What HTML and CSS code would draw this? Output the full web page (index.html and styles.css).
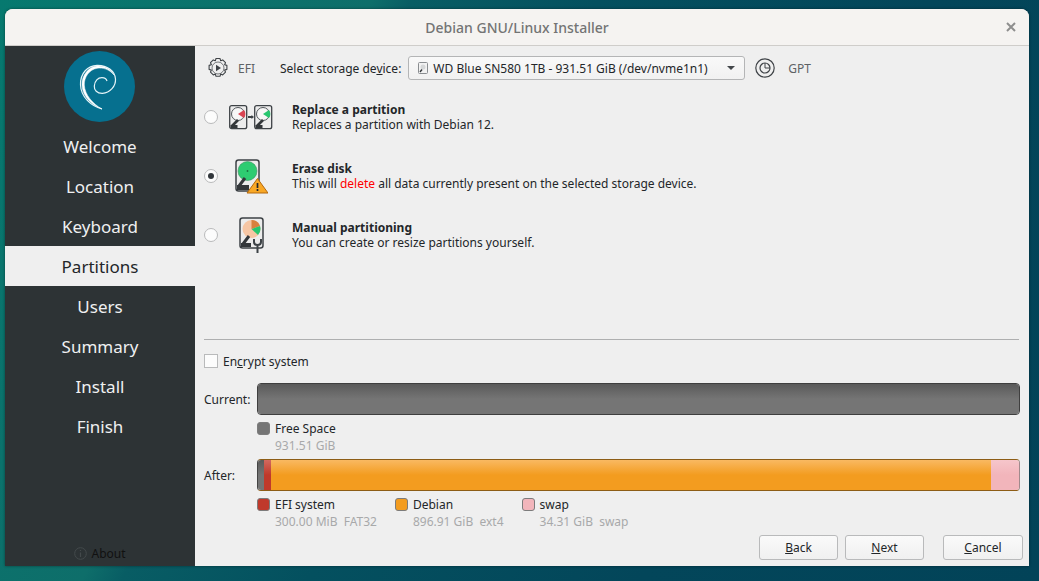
FILE: index.html
```html
<!DOCTYPE html>
<html lang="en">
<head>
  <meta charset="UTF-8" />
  <title>Debian GNU/Linux Installer</title>
  <link rel="stylesheet" href="styles.css">
</head>
<body>
  <div class="window">
    <div class="titlebar">
      <span class="title">Debian GNU/Linux Installer</span>
      <svg class="close" width="10" height="10" viewBox="0 0 10 10"><path d="M1 1l8 8M9 1l-8 8" stroke="#8e8e8e" stroke-width="2"/></svg>
    </div>
    <div class="content">
      <div class="sidebar">
        <svg class="logo" width="71" height="71" viewBox="0 0 71 71">
          <circle cx="35.5" cy="35.5" r="35.5" fill="#06708f"/>
          <path d="M38 58C27 55 17 46 16.5 34C16 22 24 14.500 33 14.300C43 14 51 20 51.500 28C52 35 46 42 38.500 42.300C33 42.500 30 39 30.300 35C30.600 30 34 26.500 38 26.600C40.500 26.700 42.500 28 43 30" fill="none" stroke="#e4f3f7" stroke-width="1.200"/>
          <path d="M38 58C28 54 18.500 46 18 34C17.500 24 25 15.500 33 15C41 14.500 47 18 50 24C45 18 39 16.500 33 17.300C25.500 18.500 20 26 20.300 34C20.800 44 29 53 38 58Z" fill="#fff" stroke="#fff" stroke-width=".5"/>
        </svg>
        <nav class="steps">
          <div class="step">Welcome</div>
          <div class="step">Location</div>
          <div class="step">Keyboard</div>
          <div class="step active">Partitions</div>
          <div class="step">Users</div>
          <div class="step">Summary</div>
          <div class="step">Install</div>
          <div class="step">Finish</div>
        </nav>
        <div class="about">
          <svg width="13" height="13" viewBox="0 0 13 13"><circle cx="6.500" cy="6.500" r="5.800" fill="none" stroke="#444a4c"/><path d="M6.500 3v1M6.500 5.500V10" stroke="#444a4c" stroke-width="1.200"/></svg>
          About
        </div>
      </div>
      <div class="main">
        <div class="device-row">
          <svg class="fw-icon" width="22" height="22" viewBox="0 0 22 22">
            <path d="M9 1.500h4l.7 2.300 2-.9 2.800 2.800-.9 2 2.300.7v4l-2.300.7.900 2-2.800 2.800-2-.9-.7 2.300H9l-.7-2.300-2 .9-2.800-2.800.9-2-2.300-.7v-4l2.300-.7-.9-2 2.800-2.800 2 .9z" fill="none" stroke="#3f4347" stroke-width="1.100" stroke-linejoin="round"/>
            <circle cx="11" cy="11" r="6" fill="none" stroke="#3f4347" stroke-width=".7"/>
            <path d="M9 7.800v6.400l5-3.200z" fill="#3f4347"/>
          </svg>
          <span class="fw-label efi">EFI</span>
          <label class="device-label">Select storage de<u>v</u>ice:</label>
          <div class="combo">
            <svg width="10" height="12" viewBox="0 0 10 12"><rect x=".5" y=".5" width="9" height="11" rx="1" fill="#f2f2f2" stroke="#8a8d90"/><circle cx="5" cy="5" r="2.500" fill="#d5d7d8"/><path d="M2 10l2-2.500" stroke="#33373a" stroke-width="1.400"/></svg>
            <span class="combo-text">WD Blue SN580 1TB - 931.51 GiB (/dev/nvme1n1)</span>
            <span class="combo-arrow"></span>
          </div>
          <svg class="gpt-icon" width="20" height="20" viewBox="0 0 20 20">
            <circle cx="10" cy="10" r="9.200" fill="none" stroke="#3f4347" stroke-width="1.200"/>
            <circle cx="10" cy="10" r="5" fill="none" stroke="#3f4347" stroke-width="1.200"/>
            <path d="M10 10V5M10 10h5" stroke="#3f4347" stroke-width="1"/>
          </svg>
          <span class="fw-label">GPT</span>
        </div>

        <div class="options">
          <div class="option">
            <span class="radio"></span>
            <div class="option-icon">
              <svg width="44" height="25" viewBox="0 0 44 25">
                <rect x=".7" y=".7" width="17" height="23" rx="2" fill="#ececec" stroke="#3d4246" stroke-width="1.300"/>
                <circle cx="9" cy="9" r="6.500" fill="#f7f7f7" stroke="#50565a"/>
                <path d="M9 9l6-4a7 7 0 0 1 0 8z" fill="#da4453"/>
                <path d="M3 21l6-6" stroke="#33373a" stroke-width="2.600"/>
                <path d="M1.500 20h7v3h-7z" fill="#33373a"/>
                <path d="M19 12h4" stroke="#3d4246" stroke-width="2"/>
                <path d="M22.500 10l2.500 2-2.500 2z" fill="#3d4246"/>
                <rect x="25.700" y=".7" width="17" height="23" rx="2" fill="#ececec" stroke="#3d4246" stroke-width="1.300"/>
                <circle cx="34" cy="9" r="6.500" fill="#f7f7f7" stroke="#50565a"/>
                <path d="M34 9l6-4a7 7 0 0 1 0 8z" fill="#27c66f"/>
                <path d="M28 21l6-6" stroke="#33373a" stroke-width="2.600"/>
                <path d="M26.500 20h7v3h-7z" fill="#33373a"/>
              </svg>
            </div>
            <div class="option-text">
              <div class="option-title">Replace a partition</div>
              <div>Replaces a partition with Debian 12.</div>
            </div>
          </div>

          <div class="option">
            <span class="radio checked"></span>
            <div class="option-icon">
              <svg class="erase-icon" width="33" height="35" viewBox="0 0 33 35">
                <rect x="1" y="1" width="23" height="31" rx="2.500" fill="#ececec" stroke="#3d4246" stroke-width="1.500"/>
                <circle cx="12.500" cy="12" r="9.500" fill="#2ecc71" stroke="#3d8f60" stroke-width=".6"/>
                <circle cx="12.500" cy="12" r=".9" fill="#1a6e40"/>
                <path d="M4 27l6-8" stroke="#33373a" stroke-width="3"/>
                <path d="M2 26h12v5H2z" fill="#33373a"/>
                <path d="M22.500 19.500L33 34H12z" fill="#f9a825" stroke="#b3690f" stroke-width="1" stroke-linejoin="round"/>
                <path d="M22.500 24v5M22.500 30v2" stroke="#23262a" stroke-width="1.700"/>
              </svg>
            </div>
            <div class="option-text">
              <div class="option-title">Erase disk</div>
              <div>This will <span class="danger">delete</span> all data currently present on the selected storage device.</div>
            </div>
          </div>

          <div class="option">
            <span class="radio"></span>
            <div class="option-icon">
              <svg class="manual-icon" width="26" height="37" viewBox="0 0 26 37">
                <rect x="1" y="1" width="23" height="30" rx="2.500" fill="#ececec" stroke="#3d4246" stroke-width="1.500"/>
                <circle cx="12.500" cy="12" r="9" fill="#f6c6a4"/>
                <path d="M12.500 12V3a9 9 0 0 1 8.500 6z" fill="#d9813d"/>
                <path d="M12.500 12L21 9a9 9 0 0 1-2 9z" fill="#27c66f"/>
                <path d="M4 27l6-8" stroke="#33373a" stroke-width="3"/>
                <path d="M2 26h10v4H2z" fill="#33373a"/>
                <path d="M15 22v3c0 2 1.500 3 3.500 3s3.500-1 3.500-3v-3M18.500 27v9" fill="none" stroke="#3d4246" stroke-width="2"/>
              </svg>
            </div>
            <div class="option-text">
              <div class="option-title">Manual partitioning</div>
              <div>You can create or resize partitions yourself.</div>
            </div>
          </div>
        </div>

        <div class="lower">
          <hr class="divider">
          <div class="encrypt">
            <span class="checkbox"></span>
            <span>En<u>c</u>rypt system</span>
          </div>

          <div class="bar-row first">
            <span class="bar-label">Current:</span>
            <div class="bar"><div class="seg seg-free fill"></div></div>
          </div>
          <div class="legend">
            <div class="legend-item">
              <span class="swatch swatch-free"></span>
              <div>
                <div>Free Space</div>
                <div class="size">931.51 GiB</div>
              </div>
            </div>
          </div>

          <div class="bar-row">
            <span class="bar-label">After:</span>
            <div class="bar after">
              <div class="seg seg-free gap"></div>
              <div class="seg seg-efi"></div>
              <div class="seg seg-debian fill"></div>
              <div class="seg seg-swap"></div>
            </div>
          </div>
          <div class="legend">
            <div class="legend-item">
              <span class="swatch swatch-efi"></span>
              <div>
                <div>EFI system</div>
                <div class="size">300.00 MiB&nbsp;&nbsp;FAT32</div>
              </div>
            </div>
            <div class="legend-item">
              <span class="swatch swatch-debian"></span>
              <div>
                <div>Debian</div>
                <div class="size">896.91 GiB&nbsp;&nbsp;ext4</div>
              </div>
            </div>
            <div class="legend-item">
              <span class="swatch swatch-swap"></span>
              <div>
                <div>swap</div>
                <div class="size">34.31 GiB&nbsp;&nbsp;swap</div>
              </div>
            </div>
          </div>

          <div class="buttons">
            <button><u>B</u>ack</button>
            <button><u>N</u>ext</button>
            <button class="cancel"><u>C</u>ancel</button>
          </div>
        </div>
      </div>
    </div>
  </div>
</body>
</html>
```

FILE: styles.css
```css
html, body {
  margin: 0;
  height: 581px;
  overflow: hidden;
}

body {
  font-family: "Noto Sans", sans-serif;
  font-size: 12px;
  color: #232629;
  background: linear-gradient(116.6deg, #06796f 0%, #0e6e6a 28%, #085d64 31%, #04505f 45%, #03465a 70%, #024358 100%);
}

u {
  text-underline-offset: 1px;
}

.window {
  box-sizing: border-box;
  width: 1024px;
  height: 557px;
  margin: 9px 0 0 5px;
  display: flex;
  flex-direction: column;
  border-radius: 8px 8px 0 0;
  overflow: hidden;
  background: #efefef;
  box-shadow: 0 0 3px rgba(0, 0, 0, 0.45);
}

.titlebar {
  flex: none;
  height: 36px;
  display: flex;
  align-items: center;
  justify-content: center;
  position: relative;
  background: #f5f3f1;
  border-bottom: 1px solid #cfcdca;
}

.title {
  font-size: 14px;
  font-weight: 500;
  color: #737474;
}

.close {
  position: absolute;
  right: 13px;
  top: 13px;
}

.content {
  flex: 1;
  display: flex;
  min-height: 0;
}

/* left column */
.sidebar {
  flex: none;
  width: 190px;
  display: flex;
  flex-direction: column;
  align-items: center;
  background: #2d3335;
  color: #eff0f1;
}

.logo {
  margin: 5px 1px 0 0;
  flex: none;
}

.steps {
  width: 100%;
  margin-top: 4px;
}

.step {
  height: 40px;
  line-height: 42px;
  text-align: center;
  font-size: 17px;
}

.step.active {
  background: #efefef;
  color: #232629;
}

.about {
  margin-top: auto;
  height: 26px;
  display: flex;
  align-items: center;
  gap: 4px;
  color: #111;
}

/* right column */
.main {
  flex: 1;
  display: flex;
  flex-direction: column;
  padding: 10px 6px 6px 9px;
  min-width: 0;
}

.device-row {
  display: flex;
  align-items: center;
  height: 24px;
  padding-left: 3px;
}

.fw-label {
  color: #5d6265;
}

.efi {
  margin-left: 9px;
  width: 42px;
}

.device-label {
  margin-right: 7px;
}

.combo {
  box-sizing: border-box;
  width: 337px;
  height: 24px;
  display: flex;
  align-items: center;
  gap: 5px;
  padding: 0 9px;
  border: 1px solid #b4b5b6;
  border-radius: 3px;
  background: linear-gradient(#f9f9f9, #f1f1f1);
}

.combo-text {
  flex: 1;
}

.combo-arrow {
  width: 0;
  height: 0;
  border-left: 4px solid transparent;
  border-right: 4px solid transparent;
  border-top: 4px solid #43474a;
}

.gpt-icon {
  margin: 0 13px 0 10px;
}

.options {
  margin-top: 20px;
  display: flex;
  flex-direction: column;
  gap: 25px;
}

.option {
  height: 34px;
  display: flex;
  align-items: center;
}

.radio {
  flex: none;
  box-sizing: border-box;
  width: 14px;
  height: 14px;
  border: 1px solid #b9babb;
  border-radius: 50%;
  background: #fcfcfc;
  display: flex;
  align-items: center;
  justify-content: center;
}

.radio.checked::after {
  content: "";
  width: 6px;
  height: 6px;
  border-radius: 50%;
  background: #31363b;
}

.option-icon {
  flex: none;
  box-sizing: border-box;
  width: 74px;
  padding-right: 9px;
  display: flex;
  justify-content: center;
}

.erase-icon,
.manual-icon {
  margin-left: 2px;
}

.option-text {
  line-height: 15px;
}

.option-title {
  font-weight: 700;
}

.danger {
  color: #f00;
}

.lower {
  margin-top: auto;
}

.divider {
  margin: 0 4px 0 0;
  border: 0;
  border-top: 1px solid #aeafb0;
}

.encrypt {
  margin-top: 14px;
  height: 14px;
  display: flex;
  align-items: center;
  gap: 5px;
}

.checkbox {
  box-sizing: border-box;
  width: 14px;
  height: 14px;
  border: 1px solid #b9babb;
  background: #fcfcfc;
}

.bar-row {
  display: flex;
  align-items: center;
  margin-top: 5px;
}

.bar-row.first {
  margin-top: 15px;
}

.bar-label {
  flex: none;
  width: 53px;
}

.bar {
  box-sizing: border-box;
  flex: 1;
  height: 32px;
  margin-right: 3px;
  display: flex;
  border: 1px solid #3f3f3f;
  border-radius: 4px;
  overflow: hidden;
}

.bar.after {
  border-color: #8d5d16;
  border-left-color: #444;
  border-right-color: #a08a8c;
}

.seg {
  height: 100%;
  flex: none;
}

.seg.fill {
  flex: 1;
}

.seg-free {
  background: linear-gradient(#5a5a5a, #757575 50%, #757575);
}

.seg-free.gap {
  width: 6px;
}

.seg-efi {
  width: 7px;
  background: linear-gradient(#d2695f, #c0392b 50%);
}

.seg-debian {
  background: linear-gradient(#f9b962, #f39c1f 50%);
}

.seg-swap {
  width: 28px;
  background: linear-gradient(#f6c6cb, #f2b5bb 50%);
}

.legend {
  display: flex;
  gap: 18px;
  margin-left: 53px;
  margin-top: 5px;
  line-height: 17px;
  height: 34px;
}

.legend-item {
  display: flex;
  gap: 5px;
}

.swatch {
  box-sizing: border-box;
  flex: none;
  width: 13px;
  height: 13px;
  margin-top: 2px;
  border: 1px solid #7c7c7c;
  border-radius: 3px;
}

.swatch-free {
  background: #757575;
}

.swatch-efi {
  background: #c0392b;
}

.swatch-debian {
  background: #f39c1f;
}

.swatch-swap {
  background: #f2b5bb;
}

.size {
  color: #a8a9aa;
}

.buttons {
  display: flex;
  justify-content: flex-end;
  gap: 7px;
  margin-top: 5px;
}

button {
  box-sizing: border-box;
  width: 79px;
  height: 25px;
  padding: 0;
  font: inherit;
  color: #232629;
  border: 1px solid #b9babb;
  border-radius: 3px;
  background: linear-gradient(#fafafa, #f0f0f0);
}

button.cancel {
  width: 80px;
  margin-left: 12px;
}
```
